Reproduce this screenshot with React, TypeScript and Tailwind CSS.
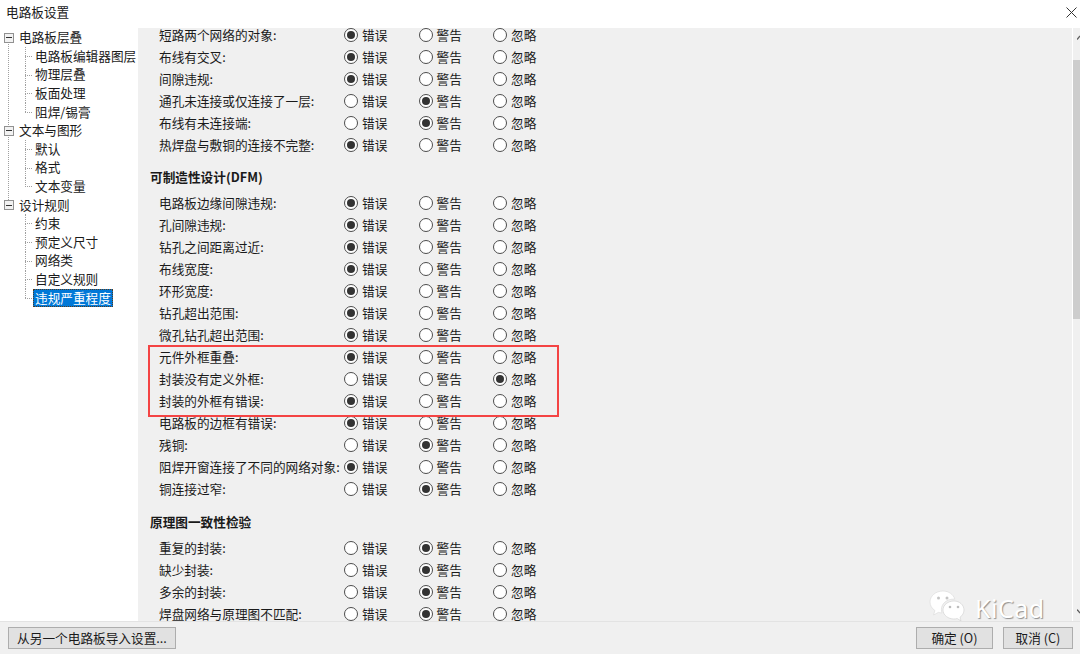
const FONT = "font-['Microsoft_YaHei','Noto_Sans_CJK_SC','Noto_Sans',sans-serif]";

type Row = [string, number];

const groupA: Row[] = [
  ['短路两个网络的对象:', 0],
  ['布线有交叉:', 0],
  ['间隙违规:', 0],
  ['通孔未连接或仅连接了一层:', 1],
  ['布线有未连接端:', 1],
  ['热焊盘与敷铜的连接不完整:', 0],
];
const groupB: Row[] = [
  ['电路板边缘间隙违规:', 0],
  ['孔间隙违规:', 0],
  ['钻孔之间距离过近:', 0],
  ['布线宽度:', 0],
  ['环形宽度:', 0],
  ['钻孔超出范围:', 0],
  ['微孔钻孔超出范围:', 0],
  ['元件外框重叠:', 0],
  ['封装没有定义外框:', 2],
  ['封装的外框有错误:', 0],
  ['电路板的边框有错误:', 0],
  ['残铜:', 1],
  ['阻焊开窗连接了不同的网络对象:', 0],
  ['铜连接过窄:', 1],
];
const groupC: Row[] = [
  ['重复的封装:', 1],
  ['缺少封装:', 1],
  ['多余的封装:', 1],
  ['焊盘网络与原理图不匹配:', 1],
];

function Radio({ on, label }: { on: boolean; label: string }) {
  return (
    <div className="flex w-[74.5px] items-center gap-[4px]">
      <span className="flex h-[14px] w-[14px] shrink-0 items-center justify-center rounded-full border border-[#4d4d4d] bg-white">
        {on && <span className="h-[8px] w-[8px] rounded-full bg-[#333333]" />}
      </span>
      <span className="pb-[1px] leading-[13px]">{label}</span>
    </div>
  );
}

function SevRow({ label, sel }: { label: string; sel: number }) {
  return (
    <div className="flex h-[22px] items-center">
      <div className="w-[206px] shrink-0 whitespace-nowrap pb-[1px] pl-[21px] leading-[13px]">{label}</div>
      <Radio on={sel === 0} label="错误" />
      <Radio on={sel === 1} label="警告" />
      <Radio on={sel === 2} label="忽略" />
    </div>
  );
}

const tree: { t: string; kids: string[] }[] = [
  { t: '电路板层叠', kids: ['电路板编辑器图层', '物理层叠', '板面处理', '阻焊/锡膏'] },
  { t: '文本与图形', kids: ['默认', '格式', '文本变量'] },
  { t: '设计规则', kids: ['约束', '预定义尺寸', '网络类', '自定义规则', '违规严重程度'] },
];

function Tree() {
  return (
    <div className="w-[138px] shrink-0 overflow-hidden bg-white pt-[0.4px] text-[#1a1a1a]">
      {tree.map((g, gi) => (
        <div key={g.t} className="relative">
          {gi < tree.length - 1 && (
            <span className="absolute left-[8px] top-[14px] h-full border-l border-dotted border-[#a0a0a0]" />
          )}
          <div className="flex h-[18.6px] items-center pl-[4px]">
            <span className="relative flex h-[10px] w-[10px] shrink-0 items-center justify-center border border-[#919191] bg-[#f2f2f2]">
              <span className="h-[1px] w-[6px] bg-[#333333]" />
            </span>
            <span className="ml-[5px] whitespace-nowrap pb-[1px] leading-[14px]">{g.t}</span>
          </div>
          <div className="relative">
            {g.kids.map((k, ki) => {
              const active = k === '违规严重程度';
              return (
                <div key={k} className="relative flex h-[18.6px] items-center whitespace-nowrap pl-[35px]">
                  <span className="absolute left-[25px] top-0 h-[9.5px] border-l border-dotted border-[#a0a0a0]" />
                  {ki < g.kids.length - 1 && (
                    <span className="absolute left-[25px] top-[9px] h-[10px] border-l border-dotted border-[#a0a0a0]" />
                  )}
                  <span className="absolute left-[25px] top-[9px] w-[7px] border-t border-dotted border-[#a0a0a0]" />
                  {active ? (
                    <span className="-ml-[2px] border border-dotted border-[#5a3a1a] bg-[#0078d7] px-[1px] leading-[16px] text-white">
                      {k}
                    </span>
                  ) : (
                    <span className="pb-[1px] leading-[14px]">{k}</span>
                  )}
                </div>
              );
            })}
          </div>
        </div>
      ))}
    </div>
  );
}

function Watermark() {
  return (
    <div className="absolute left-[929px] top-[590px] flex items-center gap-[8px] text-white">
      <svg width="38" height="36" viewBox="0 0 38 36">
        <path d="M14 1C6.800 1 1 5.900 1 12c0 3.500 1.900 6.500 4.900 8.500L4.600 25l4.700-2.600c1.200.3 2.400.5 3.700.5-.4-1.100-.6-2.200-.6-3.400 0-5.800 5.300-10.400 12-10.400.5 0 .9 0 1.400.1C24.600 4.600 19.700 1 14 1z" fill="#ffffff" stroke="#d8d8d8" strokeWidth="0.6" />
        <path d="M25 11c-6 0-11 4-11 9s5 9 11 9c1.100 0 2.200-.1 3.200-.4l3.800 2.200-1-3.600c2.500-1.700 4-4.300 4-7.200 0-5-4.500-9-10-9z" fill="#ffffff" stroke="#cfcfcf" strokeWidth="0.6" />
        <circle cx="9.500" cy="8" r="1.500" fill="#c4c4c4" />
        <circle cx="18" cy="8" r="1.500" fill="#c4c4c4" />
        <circle cx="21" cy="17" r="1.300" fill="#bdbdbd" />
        <circle cx="29" cy="17" r="1.300" fill="#bdbdbd" />
      </svg>
      <span className="font-['Noto_Sans',sans-serif] text-[25px] leading-[36px] tracking-[0.5px] [text-shadow:1px_1px_1px_#8f8f8f]">
        KiCad
      </span>
    </div>
  );
}

function Btn({ w, children }: { w: string; children: React.ReactNode }) {
  return (
    <div className={`flex h-[22px] items-center justify-center border border-[#adadad] bg-[#e1e1e1] pb-[1px] leading-[13px] text-[#1a1a1a] ${w}`}>
      {children}
    </div>
  );
}

function GroupHeader({ title, className }: { title: string; className: string }) {
  return <div className={`flex h-[22px] items-center pb-[1px] pl-[12px] font-bold leading-[13px] ${className}`}>{title}</div>;
}

export default function App() {
  return (
    <div className={`relative flex h-[654px] w-[1080px] flex-col overflow-hidden bg-white text-[12.67px] text-[#1a1a1a] ${FONT}`}>
      <div className="flex h-[28px] shrink-0 items-center justify-between bg-white pb-[4px] pl-[6px] pr-[3px]">
        <span className="pb-[1px] leading-[14px]">电路板设置</span>
        <svg width="11" height="11" viewBox="0 0 11 11" stroke="#333333" strokeWidth="1">
          <path d="M0.500 0.500 L10.500 10.500 M10.500 0.500 L0.500 10.500" />
        </svg>
      </div>

      <div className="flex min-h-0 flex-1">
        <Tree />
        <div className="min-w-0 flex-1 bg-[#f0f0f0]">
          <div className="-mt-[4px]">
            {groupA.map(([l, s]) => <SevRow key={l} label={l} sel={s} />)}
            <GroupHeader title="可制造性设计(DFM)" className="mt-[10px]" />
            <div className="mt-[4px]">
              {groupB.map(([l, s]) => <SevRow key={l} label={l} sel={s} />)}
            </div>
            <GroupHeader title="原理图一致性检验" className="mt-[11px]" />
            <div className="mt-[4px]">
              {groupC.map(([l, s]) => <SevRow key={l} label={l} sel={s} />)}
            </div>
          </div>
        </div>
        <div className="flex w-[8px] shrink-0 flex-col items-start overflow-hidden border-l border-white bg-[#f0f0f0]">
          <svg className="ml-[4px] mt-[7px] shrink-0" width="3" height="5" viewBox="0 0 3 5" fill="none" stroke="#606060" strokeWidth="1.200">
            <path d="M0 4.500 L3 1" />
          </svg>
          <div className="mt-[20px] h-[259px] w-full shrink-0 bg-[#cdcdcd]" />
          <div className="flex-1" />
          <svg className="mb-[7px] ml-[4px] shrink-0" width="3" height="5" viewBox="0 0 3 5" fill="none" stroke="#606060" strokeWidth="1.200">
            <path d="M0 0.500 L3 4" />
          </svg>
        </div>
      </div>

      <div className="flex h-[33px] shrink-0 items-start justify-between border-t border-[#e3e3e3] bg-[#f0f0f0] pl-[8px] pr-[7px] pt-[5px]">
        <Btn w="w-[168px]">从另一个电路板导入设置...</Btn>
        <div className="flex gap-[10px]">
          <Btn w="w-[77px]">确定 (O)</Btn>
          <Btn w="w-[70px]">取消 (C)</Btn>
        </div>
      </div>

      <div className="pointer-events-none absolute left-[148px] top-[345px] h-[72px] w-[411px] border-2 border-[#f44444]" />
      <Watermark />
    </div>
  );
}
